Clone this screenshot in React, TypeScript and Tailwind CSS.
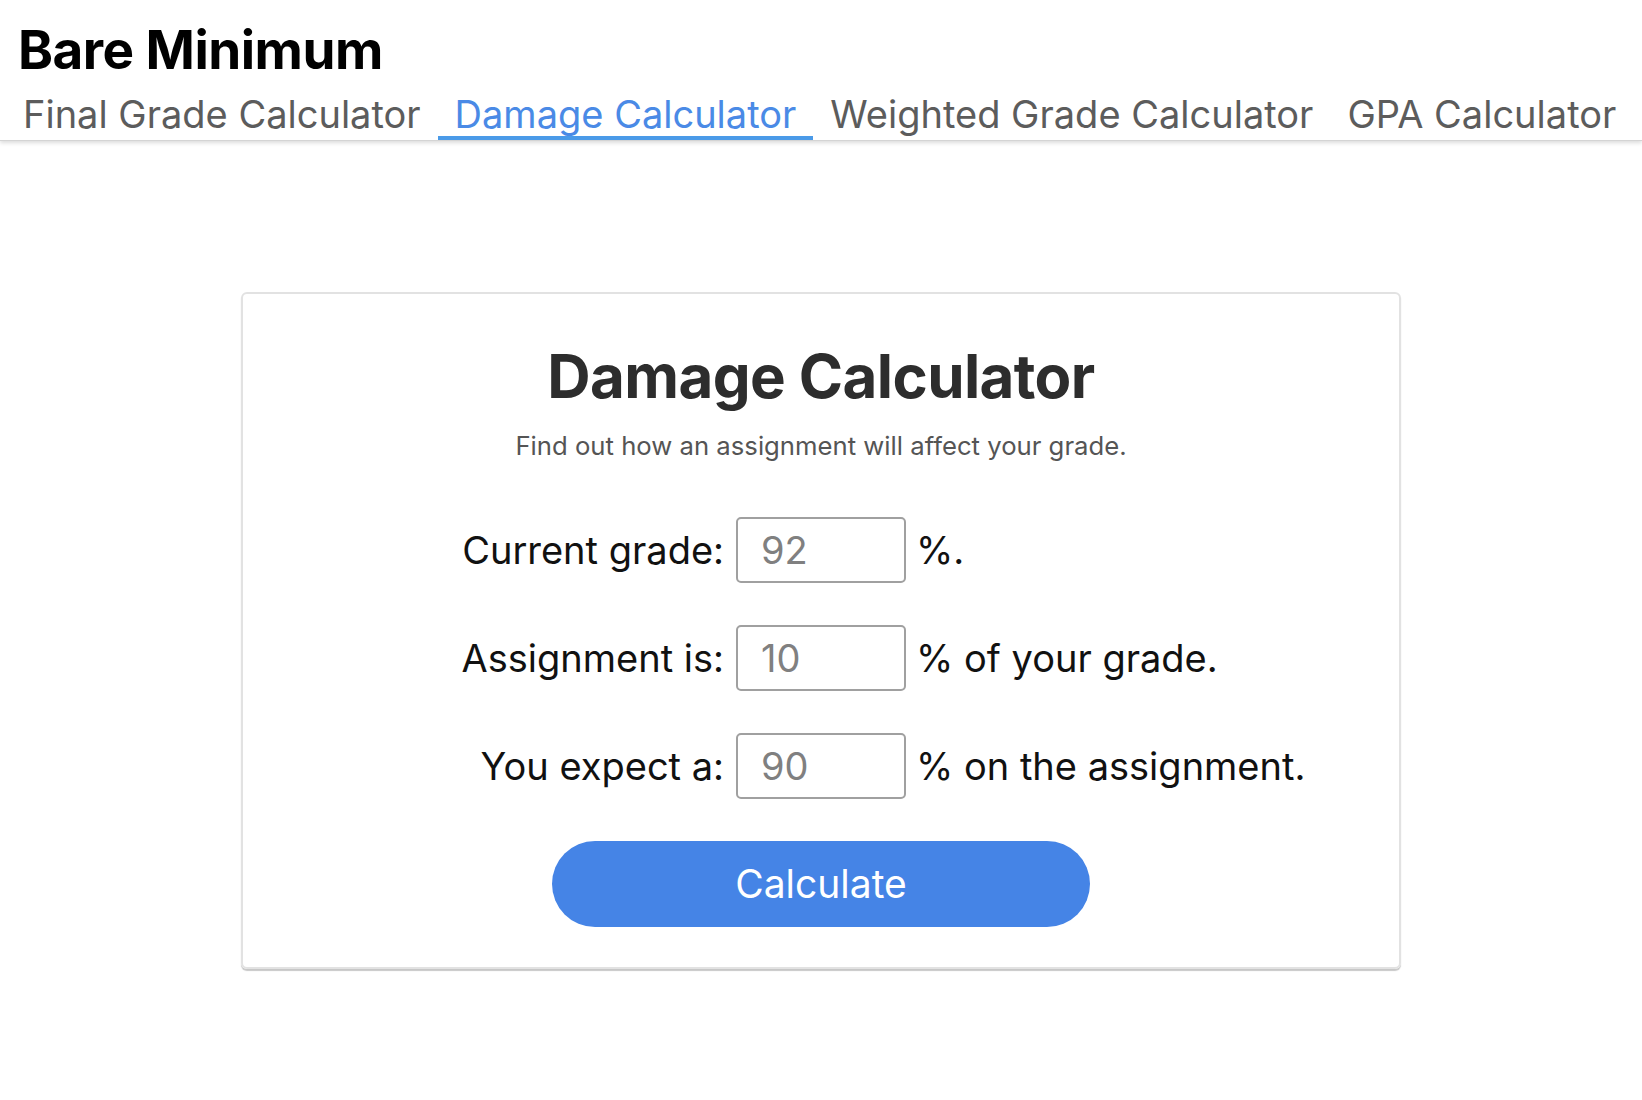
import React, { useState } from 'react';

const TABS = ['Final Grade Calculator', 'Damage Calculator', 'Weighted Grade Calculator', 'GPA Calculator'];

const ROWS = [
  { label: 'Current grade:', placeholder: '92', suffix: '%.' },
  { label: 'Assignment is:', placeholder: '10', suffix: '% of your grade.' },
  { label: 'You expect a:', placeholder: '90', suffix: '% on the assignment.' },
];

export default function App() {
  const [active, setActive] = useState(1);

  return (
    <div className="min-h-screen bg-white font-['Inter','Liberation_Sans',sans-serif]">
      {/* Header */}
      <header className="border-b border-[#d4d4d4] shadow-[0_2px_4px_rgba(0,0,0,0.14)]">
        <h1 className="pl-[18px] pt-[24px] text-[53px] font-bold leading-none text-black tracking-[-0.01em]">
          Bare Minimum
        </h1>
        <nav className="mt-[18px] flex pl-[6px]">
          {TABS.map((tab, i) => (
            <button
              key={tab}
              onClick={() => setActive(i)}
              className={`px-[17px] pb-[3px] text-[38px] leading-none border-b-[4px] ${
                i === active ? 'text-[#4a8ae6] border-[#4a9ae8]' : 'text-[#5c5c5c] border-transparent'
              }`}
            >
              {tab}
            </button>
          ))}
        </nav>
      </header>

      {/* Card */}
      <main className="flex justify-center pt-[151px]">
        <div className="w-[1160px] rounded-[6px] border-2 border-[#e2e2e2] shadow-[0_2px_1px_rgba(0,0,0,0.22)] pt-[52px] pb-[40px] flex flex-col items-center">
          <h2 className="text-[60px] font-bold leading-none text-[#2d2d2d] tracking-[-0.01em]">Damage Calculator</h2>
          <p className="mt-[27px] text-[25.7px] leading-none text-[#555]">
            Find out how an assignment will affect your grade.
          </p>

          <div className="mt-[58px] grid grid-cols-[1fr_auto_1fr] items-center gap-x-[12px] gap-y-[42px] w-full">
            {ROWS.map((row) => (
              <React.Fragment key={row.label}>
                <label className="justify-self-end text-[38px] leading-none text-[#111]">{row.label}</label>
                <input
                  type="text"
                  placeholder={row.placeholder}
                  className="w-[170px] h-[66px] rounded-[5px] border-2 border-[#a0a0a0] pl-[23px] text-[38px] text-[#333] placeholder:text-[#808080] outline-none"
                />
                <span className="-ml-[2px] text-[38px] leading-none text-[#111]">{row.suffix}</span>
              </React.Fragment>
            ))}
          </div>

          <button className="mt-[42px] w-[538px] h-[86px] rounded-full bg-[#4584e6] text-white text-[39px] leading-none">
            Calculate
          </button>
        </div>
      </main>
    </div>
  );
}
